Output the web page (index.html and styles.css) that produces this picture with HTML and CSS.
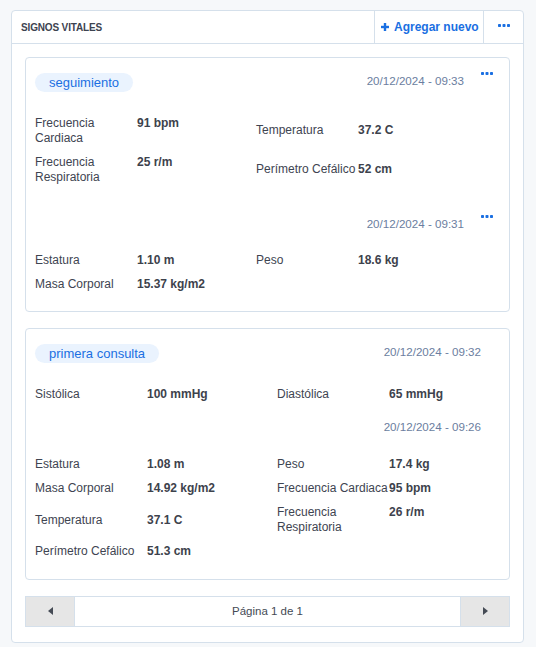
FILE: index.html
```html
<!DOCTYPE html>
<html lang="es">
<head>
<meta charset="utf-8">
<title>Signos vitales</title>
<link rel="stylesheet" href="styles.css">
</head>
<body>
<div class="panel">
  <div class="panel-head">
    <div class="panel-title">SIGNOS VITALES</div>
    <button class="add-btn">
      <svg class="plus" width="8" height="8" viewBox="0 0 8 8"><rect x="2.8" y="0" width="2.4" height="8" fill="currentColor"/><rect x="0" y="2.8" width="8" height="2.4" fill="currentColor"/></svg>
      <span>Agregar nuevo</span>
    </button>
    <div class="head-menu">
      <svg class="dots" width="12" height="3" viewBox="0 0 12 3"><rect x="0" y="0" width="3" height="3" rx="0.8" fill="currentColor"/><rect x="4.5" y="0" width="3" height="3" rx="0.8" fill="currentColor"/><rect x="9" y="0" width="3" height="3" rx="0.8" fill="currentColor"/></svg>
    </div>
  </div>

  <div class="panel-body">
    <div class="card card--a">
      <div class="record record--tall">
        <div class="rec-head">
          <span class="badge">seguimiento</span>
          <span class="date">20/12/2024 - 09:33</span>
          <svg class="dots card-dots" width="12" height="3" viewBox="0 0 12 3"><rect x="0" y="0" width="3" height="3" rx="0.8" fill="currentColor"/><rect x="4.5" y="0" width="3" height="3" rx="0.8" fill="currentColor"/><rect x="9" y="0" width="3" height="3" rx="0.8" fill="currentColor"/></svg>
        </div>
        <div class="vitals">
          <div class="pair"><span class="lbl">Frecuencia Cardiaca</span><span class="val">91 bpm</span></div>
          <div class="pair"><span class="lbl">Temperatura</span><span class="val">37.2 C</span></div>
          <div class="pair"><span class="lbl">Frecuencia Respiratoria</span><span class="val">25 r/m</span></div>
          <div class="pair"><span class="lbl">Perímetro Cefálico</span><span class="val">52 cm</span></div>
        </div>
      </div>
      <div class="record">
        <div class="rec-head">
          <span class="date">20/12/2024 - 09:31</span>
          <svg class="dots card-dots" width="12" height="3" viewBox="0 0 12 3"><rect x="0" y="0" width="3" height="3" rx="0.8" fill="currentColor"/><rect x="4.5" y="0" width="3" height="3" rx="0.8" fill="currentColor"/><rect x="9" y="0" width="3" height="3" rx="0.8" fill="currentColor"/></svg>
        </div>
        <div class="vitals">
          <div class="pair"><span class="lbl">Estatura</span><span class="val">1.10 m</span></div>
          <div class="pair"><span class="lbl">Peso</span><span class="val">18.6 kg</span></div>
          <div class="pair"><span class="lbl">Masa Corporal</span><span class="val">15.37 kg/m2</span></div>
        </div>
      </div>
    </div>

    <div class="card card--b">
      <div class="record">
        <div class="rec-head rec-head--nomenu">
          <span class="badge">primera consulta</span>
          <span class="date">20/12/2024 - 09:32</span>
        </div>
        <div class="vitals">
          <div class="pair"><span class="lbl">Sistólica</span><span class="val">100 mmHg</span></div>
          <div class="pair"><span class="lbl">Diastólica</span><span class="val">65 mmHg</span></div>
        </div>
      </div>
      <div class="record">
        <div class="rec-head rec-head--nomenu">
          <span class="date">20/12/2024 - 09:26</span>
        </div>
        <div class="vitals">
          <div class="pair"><span class="lbl">Estatura</span><span class="val">1.08 m</span></div>
          <div class="pair"><span class="lbl">Peso</span><span class="val">17.4 kg</span></div>
          <div class="pair"><span class="lbl">Masa Corporal</span><span class="val">14.92 kg/m2</span></div>
          <div class="pair"><span class="lbl">Frecuencia Cardiaca</span><span class="val">95 bpm</span></div>
          <div class="pair"><span class="lbl">Temperatura</span><span class="val">37.1 C</span></div>
          <div class="pair"><span class="lbl">Frecuencia Respiratoria</span><span class="val">26 r/m</span></div>
          <div class="pair"><span class="lbl">Perímetro Cefálico</span><span class="val">51.3 cm</span></div>
        </div>
      </div>
    </div>

    <div class="pager">
      <button class="pager-btn" aria-label="Anterior">
        <svg width="5" height="8" viewBox="0 0 5 8"><polygon points="5,0 5,8 0,4" fill="currentColor"/></svg>
      </button>
      <div class="pager-info">Página 1 de 1</div>
      <button class="pager-btn pager-btn--next" aria-label="Siguiente">
        <svg width="5" height="8" viewBox="0 0 5 8"><polygon points="0,0 5,4 0,8" fill="currentColor"/></svg>
      </button>
    </div>
  </div>
</div>
</body>
</html>
```

FILE: styles.css
```css
* { box-sizing: border-box; }

body {
  margin: 0;
  background: #f6f8fa;
  font-family: "Liberation Sans", Arial, sans-serif;
  color: #3e4451;
}

.panel {
  margin: 10px 12px 0 11px;
  background: #fff;
  border: 1px solid #d5e0eb;
  border-radius: 4px;
}

.panel-head {
  display: flex;
  align-items: stretch;
  height: 33px;
  border-bottom: 1px solid #d5e0eb;
}

.panel-title {
  flex: 1;
  display: flex;
  align-items: center;
  padding-left: 9px;
  font-size: 10px;
  font-weight: bold;
  letter-spacing: -0.15px;
  color: #3d4350;
}

.add-btn {
  display: flex;
  align-items: center;
  gap: 5px;
  width: 110px;
  padding: 0 0 0 6px;
  margin: 0;
  background: #fff;
  border: none;
  border-left: 1px solid #d5e0eb;
  border-right: 1px solid #d5e0eb;
  font-family: inherit;
  font-size: 12px;
  font-weight: bold;
  color: #1a6fe2;
  cursor: pointer;
}

.plus { display: block; }

.head-menu {
  width: 39px;
  display: flex;
  align-items: center;
  justify-content: center;
  color: #1a6fe2;
  padding-bottom: 3px;
}

.dots { display: block; }

.panel-body {
  padding: 13px 13px 15px 13px;
  display: flex;
  flex-direction: column;
  gap: 16px;
}

.card {
  border: 1px solid #d5e0eb;
  border-radius: 4px;
  padding: 15px 16px 15px 9px;
}

.record + .record { margin-top: 12.5px; }
.record--tall + .record { margin-top: 27px; }
.record--tall + .record .vitals { margin-top: 17px; }

.rec-head {
  display: flex;
  align-items: flex-start;
}

.badge {
  height: 19px;
  line-height: 19px;
  padding: 0 14px;
  border-radius: 10px;
  background: #eaf3fe;
  color: #1a6fe2;
  font-size: 13px;
}

.date {
  margin-left: auto;
  font-size: 11.6px;
  line-height: 15px;
  color: #6b7ea0;
}

.card-dots {
  margin: -1px 0 0 17px;
  color: #1a6fe2;
}

.rec-head--nomenu .date { margin-right: 12px; }

.vitals {
  margin-top: 19px;
  display: grid;
  align-items: center;
}

.card--a .vitals { grid-template-columns: 221px 1fr; }
.card--b .vitals { grid-template-columns: 242px 1fr; }

.pair {
  display: flex;
  align-items: flex-start;
  padding: 4.5px 0;
  font-size: 12px;
  line-height: 15px;
}

.lbl {
  flex: none;
  color: #3e4451;
}

.card--a .lbl { width: 102px; }
.card--b .lbl { width: 112px; }

.val {
  font-weight: bold;
  color: #3d424c;
}

.pager {
  display: flex;
  height: 31px;
  border: 1px solid #d5e0eb;
}

.pager-btn {
  width: 49px;
  margin: 0;
  padding: 0;
  border: none;
  border-right: 1px solid #d5e0eb;
  background: #e6e6e6;
  color: #454b55;
  display: flex;
  align-items: center;
  justify-content: center;
}

.pager-btn--next {
  border-right: none;
  border-left: 1px solid #d5e0eb;
}

.pager-info {
  flex: 1;
  display: flex;
  align-items: center;
  justify-content: center;
  font-size: 11.5px;
  color: #444a54;
}
```
